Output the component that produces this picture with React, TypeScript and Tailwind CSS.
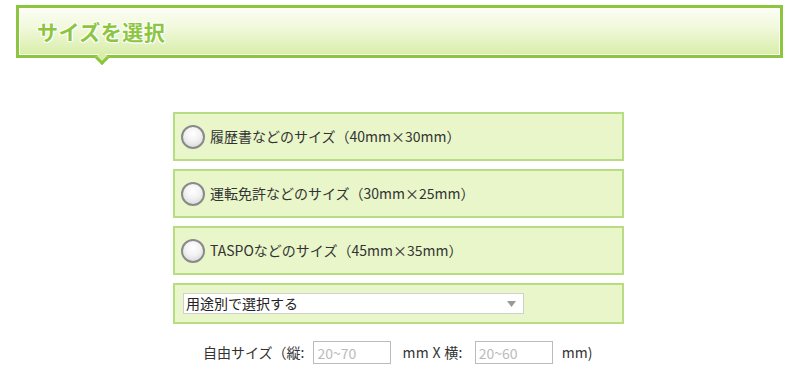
import React from "react";

const font = { fontFamily: '"Noto Sans CJK JP", "Noto Sans", sans-serif' };

function Radio() {
  return (
    <span className="inline-block w-[24px] h-[24px] rounded-full border-2 border-[#8a8a8a] bg-[radial-gradient(circle_at_50%_35%,#ffffff_0%,#f2f2f2_45%,#cfcfcf_100%)] shrink-0" />
  );
}

function Option({ label }: { label: string }) {
  return (
    <div className="h-[49px] border-2 border-[#b8dc82] bg-[#e8f6c9] flex items-center pl-[6px] gap-[5px]">
      <Radio />
      <span className="text-[14px] text-[#333]">{label}</span>
    </div>
  );
}

export default function App() {
  return (
    <div className="w-[800px] h-[388px] bg-white overflow-hidden" style={font}>
      <div className="pt-[5px] px-[16px] pr-[17px]">
        <div className="relative h-[53px] border-[3px] border-[#8cc63e] bg-white p-[1px]">
          <div className="h-full bg-[linear-gradient(#fbfdf3,#f1f9dc_40%,#d9eeab)] flex items-center pl-[17px]">
            <span className="text-[21px] font-bold text-[#8cc63e] tracking-[0.5px] [text-shadow:0_0_2px_#fff,0_0_2px_#fff,1px_1px_1px_#fff,-1px_-1px_1px_#fff,1px_-1px_1px_#fff,-1px_1px_1px_#fff]">
              サイズを選択
            </span>
          </div>
          <div className="absolute left-[78px] bottom-[-8px] w-[10px] h-[10px] rotate-45 bg-[#d9eeab] border-r-[3px] border-b-[3px] border-[#8cc63e]" />
        </div>
      </div>

      <div className="w-[451px] ml-[173px] mt-[54px] flex flex-col gap-[8px]">
        <Option label="履歴書などのサイズ（40mm×30mm）" />
        <Option label="運転免許などのサイズ（30mm×25mm）" />
        <Option label="TASPOなどのサイズ（45mm×35mm）" />
        <div className="h-[41px] border-2 border-[#b8dc82] bg-[#e8f6c9] flex items-center pl-[8px]">
          <div className="w-[341px] h-[21px] bg-white border border-[#cfcfcf] flex items-center justify-between pl-[2px] pr-[7px]">
            <span className="text-[14px] text-[#222]">用途別で選択する</span>
            <svg width="9" height="6" viewBox="0 0 9 6">
              <path d="M0 0 L9 0 L4.5 6 Z" fill="#999" />
            </svg>
          </div>
        </div>
      </div>

      <div className="flex items-center ml-[203px] mt-[17px] text-[14px] text-[#333]">
        <span>自由サイズ（縦:</span>
        <input
          className="ml-[9px] w-[78px] h-[23px] border border-[#bbb] px-[3px] text-[14px] placeholder-[#bbb] outline-none"
          placeholder="20~70"
        />
        <span className="ml-[11px] mr-[3px] tracking-[0.3px]">mm X 横:</span>
        <input
          className="ml-[9px] w-[78px] h-[23px] border border-[#bbb] px-[3px] text-[14px] placeholder-[#bbb] outline-none"
          placeholder="20~60"
        />
        <span className="ml-[9px]">mm)</span>
      </div>
    </div>
  );
}
